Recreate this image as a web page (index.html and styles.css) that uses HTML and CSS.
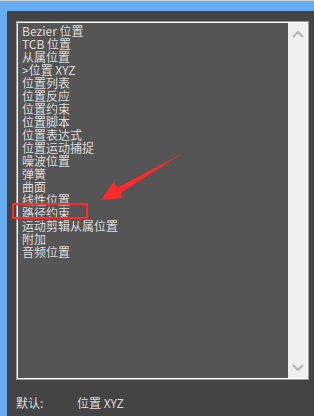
FILE: index.html
```html
<!DOCTYPE html>
<html lang="zh-CN">
<head>
    <meta charset="UTF-8">
    <title>位置控制器</title>
    <link rel="stylesheet" href="styles.css">
</head>
<body>
    <div class="frame">
        <div class="panel">
            <div class="listbox">
                <ul class="items">
                    <li>Bezier 位置</li>
                    <li>TCB 位置</li>
                    <li>从属位置</li>
                    <li>&gt;位置 XYZ</li>
                    <li>位置列表</li>
                    <li>位置反应</li>
                    <li>位置约束</li>
                    <li>位置脚本</li>
                    <li>位置表达式</li>
                    <li>位置运动捕捉</li>
                    <li>噪波位置</li>
                    <li>弹簧</li>
                    <li>曲面</li>
                    <li>线性位置</li>
                    <li>路径约束</li>
                    <li>运动剪辑从属位置</li>
                    <li>附加</li>
                    <li>音频位置</li>
                </ul>
                <div class="scrollbar">
                    <svg width="12" height="8" viewBox="0 0 12 8"><path d="M1 7 L6 2 L11 7" fill="none" stroke="#b4b4b4" stroke-width="2.2"/></svg>
                    <svg width="12" height="8" viewBox="0 0 12 8"><path d="M1 1 L6 6 L11 1" fill="none" stroke="#b4b4b4" stroke-width="2.2"/></svg>
                </div>
            </div>
            <div class="default-row">
                <span class="default-label">默认:</span>
                <span>位置 XYZ</span>
            </div>
        </div>
    </div>

    <!-- 标注：红框和箭头 -->
    <div class="mark-box"></div>
    <svg class="mark-arrow" width="314" height="416" viewBox="0 0 314 416">
        <polygon points="183,153 120.5,193 101,200 114,182.5 117,188" fill="#ff2a2a"/>
        <polygon points="101,200 113.5,182 119,190 123,198" fill="#ff2a2a"/>
    </svg>
</body>
</html>
```

FILE: styles.css
```css
* {
    margin: 0;
    padding: 0;
    box-sizing: border-box;
}

body {
    width: 314px;
    height: 416px;
    overflow: hidden;
    position: relative;
    background: #444444;
    font-family: 'Noto Sans CJK SC', 'DejaVu Sans', sans-serif;
    font-size: 12px;
    color: #dedede;
}

.frame {
    height: 416px;
    border-top: 1px solid #cdcdcd;
    background: #66adf2;
    padding: 10px 0 0 7px;
}

.panel {
    height: 100%;
    background: #444444;
    padding: 10px 5px 0 9px;
}

.listbox {
    height: 359px;
    display: flex;
    border: 1px solid #9c9c9c;
    box-shadow: inset 0 0 0 1px #ffffff;
    padding: 1px;
}

.items {
    flex: 1;
    list-style: none;
    background: #555555;
    padding: 1px 0 0 4px;
}

.items li {
    height: 13px;
    line-height: 13px;
    white-space: nowrap;
}

.scrollbar {
    width: 19px;
    background: #f0f0f0;
    display: flex;
    flex-direction: column;
    justify-content: space-between;
    align-items: center;
    padding: 7px 0 6px 1px;
}

.default-row {
    display: flex;
    margin-top: 16px;
    line-height: 13px;
}

.default-label {
    width: 61px;
}

.mark-box {
    position: absolute;
    left: 12px;
    top: 203px;
    width: 76px;
    height: 16px;
    border: 2px solid #ff2a2a;
}

.mark-arrow {
    position: absolute;
    left: 0;
    top: 0;
}
```
